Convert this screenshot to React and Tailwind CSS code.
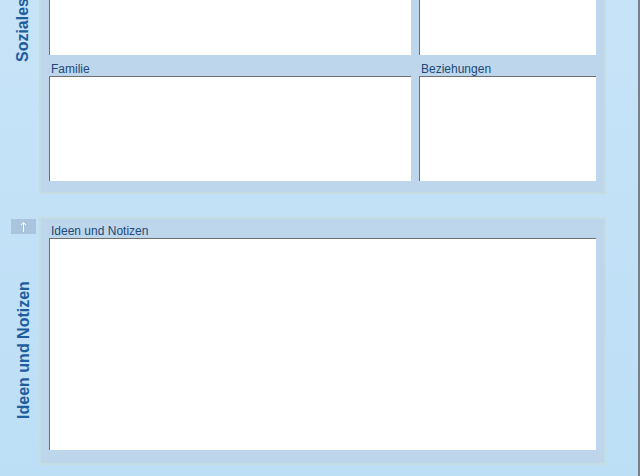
import React from "react";

const Field = ({ label, height, className = "" }) => (
  <div className={className}>
    <div className="h-[19px] pt-[6px] pl-[2px] text-[12px] leading-[13px] text-[#1d4a76] whitespace-nowrap">
      {label}
    </div>
    <textarea
      className={`block w-full ${height} bg-white border-0 border-t border-l border-[#6f6f6f] resize-none outline-none`}
    />
  </div>
);

const SideLabel = ({ title }) => (
  <div className="w-[39px] shrink-0 flex flex-col">
    <button className="mt-[2px] ml-[11px] w-[25px] h-[15px] bg-[#a9c4dc] flex items-center justify-center">
      <svg width="7" height="11" viewBox="0 0 7 11" fill="none" stroke="white" strokeWidth="1">
        <path d="M3.5 1.5V11M1 4L3.5 1.5L6 4" />
      </svg>
    </button>
    <div className="flex-1 flex items-center justify-center pl-[8px]">
      <span className="-rotate-90 whitespace-nowrap text-[16px] leading-[18px] font-bold text-[#1e5d9e]">
        {title}
      </span>
    </div>
  </div>
);

export default function App() {
  return (
    <div className="w-[640px] h-[476px] overflow-hidden bg-gradient-to-b from-[#c7e3f8] to-[#bcdff6] border-r-2 border-[#76818c] font-['Liberation_Sans',Arial,sans-serif]">
      <div className="-mt-[152px] flex flex-col gap-[23px]">
        {/* Soziales */}
        <section className="flex">
          <SideLabel title="Soziales" />
          <div className="w-[567px] bg-[#bdd6ec] border-2 border-[#c4dce2] px-[8px] pb-[11px]">
            <div className="flex gap-[8px]">
              <Field label="Freunde" height="h-[186px]" className="w-[362px]" />
              <Field label="Freizeit" height="h-[186px]" className="flex-1" />
            </div>
            <div className="flex gap-[8px] mt-[2px]">
              <Field label="Familie" height="h-[105px]" className="w-[362px]" />
              <Field label="Beziehungen" height="h-[105px]" className="flex-1" />
            </div>
          </div>
        </section>

        {/* Ideen und Notizen */}
        <section className="flex">
          <SideLabel title="Ideen und Notizen" />
          <div className="w-[567px] bg-[#bdd6ec] border-2 border-[#c4dce2] px-[8px] pb-[13px]">
            <Field label="Ideen und Notizen" height="h-[212px]" />
          </div>
        </section>
      </div>
    </div>
  );
}
